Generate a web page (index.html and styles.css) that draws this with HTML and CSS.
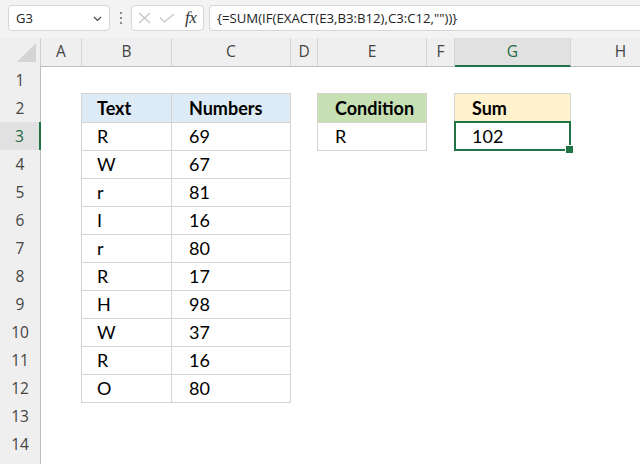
FILE: index.html
```html
<!DOCTYPE html>
<html>
<head>
<meta charset="utf-8">
<link rel="stylesheet" href="styles.css">
</head>
<body>
<div class="formula-bar">
  <div class="name-box">
    <span class="name">G3</span>
    <svg class="chev" width="9" height="6" viewBox="0 0 9 6"><path d="M1 1 L4.5 4.5 L8 1" fill="none" stroke="#444" stroke-width="1.2"/></svg>
  </div>
  <div class="dots"><i></i><i></i><i></i></div>
  <div class="fx-box">
    <svg width="13" height="12" viewBox="0 0 13 12"><path d="M1 1 L12 11 M12 1 L1 11" stroke="#c4c4c4" stroke-width="1.2" fill="none"/></svg>
    <svg width="16" height="10" viewBox="0 0 16 10"><path d="M1 4.5 L5.5 9 L15 1" stroke="#c4c4c4" stroke-width="1.2" fill="none"/></svg>
    <span class="fx">fx</span>
  </div>
  <div class="formula">{=SUM(IF(EXACT(E3,B3:B12),C3:C12,""))}</div>
</div>

<div class="sheet">
  <div class="row head">
    <div class="corner"><svg width="20" height="20" viewBox="0 0 20 20"><polygon points="19,0 19,19 0,19" fill="#d4d4d4"/></svg></div>
    <div class="ch">A</div><div class="ch">B</div><div class="ch">C</div><div class="ch">D</div>
    <div class="ch">E</div><div class="ch">F</div><div class="ch sel">G</div><div class="ch">H</div>
  </div>
  <div class="row"><div class="rh">1</div></div>
  <div class="row">
    <div class="rh">2</div>
    <div class="tc b hd blue top left">Text</div>
    <div class="tc c hd blue top">Numbers</div>
    <div class="tc e hd green top left">Condition</div>
    <div class="tc g hd yellow top left">Sum</div>
  </div>
  <div class="row">
    <div class="rh sel">3</div>
    <div class="tc b left">R</div><div class="tc c">69</div>
    <div class="tc e left">R</div>
    <div class="tc g left active">102</div>
  </div>
  <div class="row"><div class="rh">4</div><div class="tc b left">W</div><div class="tc c">67</div></div>
  <div class="row"><div class="rh">5</div><div class="tc b left">r</div><div class="tc c">81</div></div>
  <div class="row"><div class="rh">6</div><div class="tc b left">I</div><div class="tc c">16</div></div>
  <div class="row"><div class="rh">7</div><div class="tc b left">r</div><div class="tc c">80</div></div>
  <div class="row"><div class="rh">8</div><div class="tc b left">R</div><div class="tc c">17</div></div>
  <div class="row"><div class="rh">9</div><div class="tc b left">H</div><div class="tc c">98</div></div>
  <div class="row"><div class="rh">10</div><div class="tc b left">W</div><div class="tc c">37</div></div>
  <div class="row"><div class="rh">11</div><div class="tc b left">R</div><div class="tc c">16</div></div>
  <div class="row"><div class="rh">12</div><div class="tc b left">O</div><div class="tc c">80</div></div>
  <div class="row"><div class="rh">13</div></div>
  <div class="row"><div class="rh">14</div></div>
  <div class="row"><div class="rh"></div></div>
</div>
</body>
</html>
```

FILE: styles.css
```css
* { box-sizing: border-box; }
html, body { margin: 0; padding: 0; }
body {
  width: 640px;
  height: 464px;
  overflow: hidden;
  background: #fff;
  font-family: "Open Sans", "Noto Sans", sans-serif;
}

/* formula bar */
.formula-bar {
  height: 38px;
  background: #f3f3f3;
  display: flex;
  align-items: flex-start;
  padding: 5px 0 0 8px;
  white-space: nowrap;
}
.name-box {
  width: 102px;
  height: 26px;
  background: #fff;
  border: 1px solid #d6d6d6;
  border-radius: 4px;
  display: flex;
  align-items: center;
  justify-content: space-between;
  padding: 0 7px 0 7px;
  font-size: 13px;
  color: #222;
}
.chev { margin-top: 1px; }
.dots {
  width: 21px;
  height: 26px;
  display: flex;
  flex-direction: column;
  align-items: center;
  justify-content: center;
  gap: 3px;
}
.dots i {
  display: block;
  width: 2px;
  height: 2px;
  background: #8a8a8a;
}
.fx-box {
  width: 73px;
  height: 26px;
  background: #fff;
  border: 1px solid #d6d6d6;
  border-radius: 4px;
  display: flex;
  align-items: center;
  padding: 0 0 0 6px;
  gap: 8px;
}
.fx {
  font-family: "Liberation Serif", "DejaVu Serif", serif;
  font-style: italic;
  font-size: 17px;
  color: #333;
  margin-left: 2px;
  letter-spacing: -0.5px;
}
.formula {
  margin-left: 5px;
  flex: 1;
  height: 26px;
  background: #fff;
  border: 1px solid #d6d6d6;
  border-right: none;
  border-radius: 4px 0 0 4px;
  padding: 0 0 0 7px;
  font-size: 13.2px;
  line-height: 24px;
  color: #222;
}

/* sheet */
.sheet { width: 640px; }
.row {
  display: grid;
  grid-template-columns: 41px 41px 90px 119px 27px 109px 28px 116px 100px;
  height: 28px;
}
.corner {
  grid-column: 1;
  background: #efefef;
  border-right: 1px solid #d0d0d0;
  border-bottom: 1px solid #bdbdbd;
  padding: 5px 0 0 17px;
}
.corner svg { display: block; }
.ch {
  background: #efefef;
  border-right: 1px solid #d6d6d6;
  border-bottom: 1px solid #bdbdbd;
  text-align: center;
  font-size: 15.5px;
  line-height: 27px;
  color: #444;
}
.ch.sel {
  background: #e1e1e1;
  border-bottom: 2px solid #217346;
  color: #1e6b43;
}
.rh {
  grid-column: 1;
  background: #efefef;
  border-right: 1px solid #bdbdbd;
  border-bottom: 1px solid #d9d9d9;
  text-align: center;
  font-size: 15.5px;
  line-height: 28px;
  color: #444;
}
.rh.sel {
  background: #e1e1e1;
  border-right: 2px solid #217346;
  color: #1e6b43;
}

/* table cells */
.tc {
  border-right: 1px solid #d4d4d4;
  border-bottom: 1px solid #d4d4d4;
  font-family: "Lato", "Open Sans", sans-serif;
  font-size: 18px;
  line-height: 28px;
  color: #000;
  padding-left: 17px;
  white-space: nowrap;
}
.tc.b { grid-column: 3; padding-left: 15px; }
.tc.c { grid-column: 4; }
.tc.e { grid-column: 6; }
.tc.g { grid-column: 8; }
.tc.hd { font-weight: bold; }
.tc.blue { background: #ddebf7; }
.tc.green { background: #c6e0b4; }
.tc.yellow { background: #fff2cc; }
.tc.left { box-shadow: -1px 0 0 #d4d4d4; }
.tc.top { box-shadow: 0 -1px 0 #d4d4d4; }
.tc.top.left { box-shadow: 0 -1px 0 #d4d4d4, -1px 0 0 #d4d4d4, -1px -1px 0 #d4d4d4; }

.tc.active { position: relative; }
.tc.active::after {
  content: "";
  position: absolute;
  left: -1px;
  top: -1px;
  right: -1px;
  bottom: -1px;
  border: 2px solid #217346;
}
.tc.active::before {
  content: "";
  position: absolute;
  right: -4px;
  bottom: -4px;
  width: 7px;
  height: 7px;
  background: #217346;
  border: 1px solid #fff;
  z-index: 1;
}
```
